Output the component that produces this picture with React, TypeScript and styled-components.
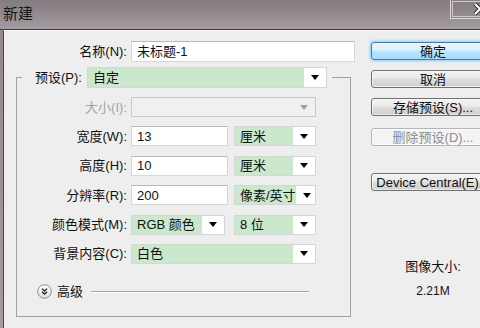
import styled, { createGlobalStyle } from "styled-components";

const GlobalStyle = createGlobalStyle`
    html, body {
        margin: 0;
        padding: 0;
    }
    body {
        width: 480px;
        height: 328px;
        overflow: hidden;
        font-family: "Liberation Sans", "Noto Sans CJK SC", sans-serif;
        font-size: 13px;
        color: #111;
    }
`;

const green = "#cae8cc";

const Window = styled.div`
    width: 480px;
    height: 328px;
    display: flex;
    flex-direction: column;
    overflow: hidden;
    background: linear-gradient(180deg, #8f878c 0%, #a39ba0 100%);
`;

const TitleBar = styled.div`
    height: 30px;
    flex-shrink: 0;
    box-sizing: border-box;
    display: flex;
    align-items: flex-start;
    border-bottom: 1px solid #3e383c;
    background: linear-gradient(180deg, #847b81 0%, #978e94 60%, #a59da2 100%);
`;

const Title = styled.span`
    margin: 6px 0 0 3px;
    font-size: 15px;
    line-height: 16px;
    color: #161616;
`;

const CloseButton = styled.div`
    margin-left: auto;
    margin-right: -12px;
    width: 42px;
    height: 19px;
    box-sizing: border-box;
    border: 1px solid #ddd8db;
    border-top: none;
    box-shadow: inset 0 0 0 1px #8a8287, inset 0 0 0 2px #cfc9cc;
    display: flex;
    align-items: center;
    padding-left: 22px;
`;

const Body = styled.div`
    flex: 1;
    display: flex;
    margin-left: 3px;
    background: #eeeeee;
    border-left: 1px solid #4a4548;
    border-top: 1px solid #fafafa;
    overflow: hidden;
`;

const LeftColumn = styled.div`
    width: 352px;
    flex-shrink: 0;
    display: flex;
    flex-direction: column;
    padding-top: 10px;
`;

const NameRow = styled.div`
    display: grid;
    grid-template-columns: 123px 224px;
    column-gap: 4px;
    height: 21px;
    align-items: center;
`;

const Label = styled.span<{ $disabled?: boolean }>`
    text-align: right;
    white-space: nowrap;
    line-height: 1;
    color: ${({ $disabled }) => ($disabled ? "#a3a3a3" : "#111")};
`;

const TextField = styled.div<{ $width?: number }>`
    width: ${({ $width }) => ($width ? `${$width}px` : "100%")};
    height: 100%;
    box-sizing: border-box;
    display: flex;
    align-items: center;
    padding: 0 5px;
    background: #fff;
    border: 1px solid #d8d8d8;
    border-top-color: #b9b9b9;
    line-height: 1;
`;

const Group = styled.fieldset`
    margin: 5px 0 0 12px;
    width: 335px;
    min-width: 0;
    box-sizing: border-box;
    padding: 9px 0 17px 0;
    border: 1px solid #a2a2a2;
    display: flex;
    flex-direction: column;
    gap: 9.4px;
`;

const Legend = styled.legend`
    margin-left: 5px;
    padding: 0 5px 0 13px;
    display: flex;
    align-items: center;
    gap: 5px;
    height: 21px;
`;

const Row = styled.div`
    display: grid;
    grid-template-columns: 110px auto;
    column-gap: 4px;
    height: 20px;
    align-items: center;
`;

const Controls = styled.div<{ $gap?: number }>`
    display: flex;
    height: 100%;
    gap: ${({ $gap }) => $gap ?? 6}px;
`;

const Select = styled.div<{ $width: number; $disabled?: boolean }>`
    width: ${({ $width }) => $width}px;
    height: 100%;
    box-sizing: border-box;
    display: flex;
    background: ${({ $disabled }) => ($disabled ? "#f0f0f0" : "#fff")};
    border: 1px solid ${({ $disabled }) => ($disabled ? "#cacaca" : "#d6d6d6")};
`;

const SelectValue = styled.div<{ $empty?: boolean }>`
    flex: 1;
    display: flex;
    align-items: center;
    padding-left: 5px;
    white-space: nowrap;
    line-height: 1;
    background: ${({ $empty }) => ($empty ? "transparent" : green)};
`;

const ArrowBox = styled.div<{ $disabled?: boolean }>`
    width: 22px;
    flex-shrink: 0;
    display: flex;
    align-items: center;
    justify-content: center;

    &::after {
        content: "";
        border-left: 4.5px solid transparent;
        border-right: 4.5px solid transparent;
        border-top: 5px solid ${({ $disabled }) => ($disabled ? "#9c9c9c" : "#000")};
    }
`;

const AdvancedRow = styled.div`
    display: flex;
    align-items: center;
    height: 16px;
    margin-top: 10px;
    padding-left: 20px;
    gap: 5px;
`;

const AdvancedText = styled.span`
    line-height: 1;
`;

const Rule = styled.div`
    flex: 1;
    margin: 1px 41px 0 3px;
    height: 1px;
    background: #a5a5a5;
    box-shadow: 0 1px 0 #fff;
`;

const RightColumn = styled.div`
    width: 124px;
    flex-shrink: 0;
    margin-left: 15px;
    display: flex;
    flex-direction: column;
    padding-top: 11px;
`;

const Button = styled.div<{ $primary?: boolean; $disabled?: boolean; $top?: number }>`
    height: 18px;
    margin-top: ${({ $top }) => $top ?? 0}px;
    box-sizing: border-box;
    display: flex;
    align-items: center;
    justify-content: center;
    white-space: nowrap;
    line-height: 1;
    border-radius: 3px;
    border: 1px solid ${({ $primary, $disabled }) => ($primary ? "#3c7fb1" : $disabled ? "#b3b6b8" : "#707070")};
    background: ${({ $primary, $disabled }) =>
        $primary
            ? "linear-gradient(180deg, #eaf6fd 0%, #d9f0fc 45%, #bee6fd 50%, #a7d9f5 100%)"
            : $disabled
              ? "#f4f4f4"
              : "linear-gradient(180deg, #f3f3f3 0%, #ebebeb 45%, #dddddd 50%, #cfcfcf 100%)"};
    box-shadow: ${({ $primary }) => ($primary ? "0 0 3px 1px #7fd0f5" : "inset 0 0 0 1px rgba(255,255,255,0.6)")};
    color: ${({ $disabled }) => ($disabled ? "#8e8e8e" : "#111")};
`;

const SizeInfo = styled.div`
    margin-top: 69px;
    display: flex;
    flex-direction: column;
    align-items: center;
    gap: 12px;
    line-height: 1;
`;

const SizeValue = styled.span`
    font-size: 12px;
`;

const ExpandIcon = () => (
    <svg width="15" height="15" viewBox="0 0 15 15">
        <defs>
            <linearGradient id="adv" x1="0" y1="0" x2="0" y2="1">
                <stop offset="0" stopColor="#ffffff" />
                <stop offset="1" stopColor="#dcdcdc" />
            </linearGradient>
        </defs>
        <circle cx="7.5" cy="7.5" r="6.8" fill="url(#adv)" stroke="#8f8f8f" />
        <path d="M5 4.6 L7.5 7 L10 4.6 M5 7.8 L7.5 10.2 L10 7.8" fill="none" stroke="#222" strokeWidth="1.3" />
    </svg>
);

const CloseX = () => (
    <svg width="14" height="12" viewBox="0 0 14 12">
        <path d="M2 1 L12 11 M12 1 L2 11" stroke="#2d2a2c" strokeWidth="4" />
        <path d="M2 1 L12 11 M12 1 L2 11" stroke="#fff" strokeWidth="2" />
    </svg>
);

const App = () => {
    return (
        <>
            <GlobalStyle />
            <Window>
                <TitleBar>
                    <Title>新建</Title>
                    <CloseButton>
                        <CloseX />
                    </CloseButton>
                </TitleBar>
                <Body>
                    <LeftColumn>
                        <NameRow>
                            <Label>名称(N):</Label>
                            <TextField>未标题-1</TextField>
                        </NameRow>
                        <Group>
                            <Legend>
                                <Label>预设(P):</Label>
                                <Select $width={240} style={{ height: 21 }}>
                                    <SelectValue>自定</SelectValue>
                                    <ArrowBox />
                                </Select>
                            </Legend>
                            <Row>
                                <Label $disabled>大小(I):</Label>
                                <Select $width={185} $disabled>
                                    <SelectValue $empty />
                                    <ArrowBox $disabled />
                                </Select>
                            </Row>
                            <Row>
                                <Label>宽度(W):</Label>
                                <Controls>
                                    <TextField $width={97}>13</TextField>
                                    <Select $width={82}>
                                        <SelectValue>厘米</SelectValue>
                                        <ArrowBox />
                                    </Select>
                                </Controls>
                            </Row>
                            <Row>
                                <Label>高度(H):</Label>
                                <Controls>
                                    <TextField $width={97}>10</TextField>
                                    <Select $width={82}>
                                        <SelectValue>厘米</SelectValue>
                                        <ArrowBox />
                                    </Select>
                                </Controls>
                            </Row>
                            <Row>
                                <Label>分辨率(R):</Label>
                                <Controls>
                                    <TextField $width={97}>200</TextField>
                                    <Select $width={82}>
                                        <SelectValue>像素/英寸</SelectValue>
                                        <ArrowBox />
                                    </Select>
                                </Controls>
                            </Row>
                            <Row>
                                <Label>颜色模式(M):</Label>
                                <Controls $gap={9}>
                                    <Select $width={94}>
                                        <SelectValue>RGB 颜色</SelectValue>
                                        <ArrowBox />
                                    </Select>
                                    <Select $width={82}>
                                        <SelectValue>8 位</SelectValue>
                                        <ArrowBox />
                                    </Select>
                                </Controls>
                            </Row>
                            <Row>
                                <Label>背景内容(C):</Label>
                                <Select $width={185}>
                                    <SelectValue>白色</SelectValue>
                                    <ArrowBox />
                                </Select>
                            </Row>
                            <AdvancedRow>
                                <ExpandIcon />
                                <AdvancedText>高级</AdvancedText>
                                <Rule />
                            </AdvancedRow>
                        </Group>
                    </LeftColumn>
                    <RightColumn>
                        <Button $primary>确定</Button>
                        <Button $top={10}>取消</Button>
                        <Button $top={10}>存储预设(S)...</Button>
                        <Button $top={12} $disabled>
                            删除预设(D)...
                        </Button>
                        <Button $top={27}>Device Central(E)...</Button>
                        <SizeInfo>
                            <span>图像大小:</span>
                            <SizeValue>2.21M</SizeValue>
                        </SizeInfo>
                    </RightColumn>
                </Body>
            </Window>
        </>
    );
};

export default App;
